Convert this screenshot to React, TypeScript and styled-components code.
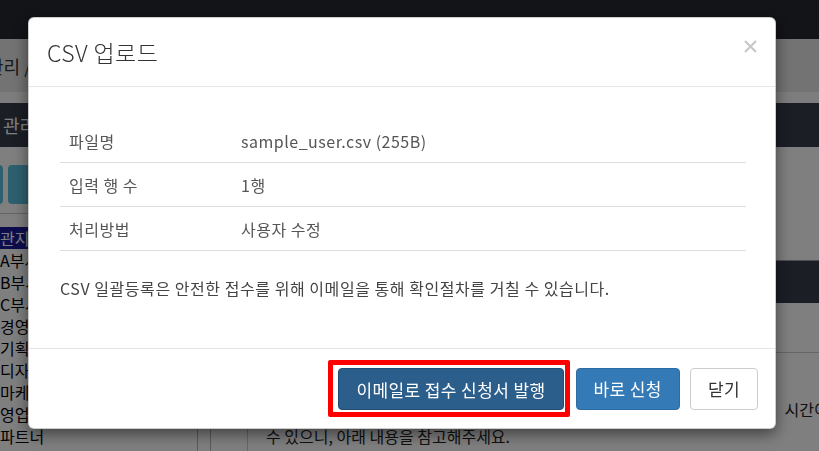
import styled, { createGlobalStyle } from "styled-components";

const GlobalStyle = createGlobalStyle`
    * { box-sizing: border-box; }
    html, body {
        margin: 0;
        padding: 0;
        height: 100%;
        overflow: hidden;
    }
    body {
        font-family: "Noto Sans CJK KR", "Noto Sans", sans-serif;
        background-color: #fff;
        color: #333;
    }
`;

/* ---------- page behind the modal ---------- */

const Page = styled.div`
    width: 100vw;
    height: 451px;
    overflow: hidden;
    display: flex;
    flex-direction: column;
`;

const TopNav = styled.div`
    height: 39px;
    flex-shrink: 0;
    background-color: #26282f;
`;

const Breadcrumb = styled.div`
    height: 53px;
    flex-shrink: 0;
    background-color: #e6e6e6;
    display: flex;
    align-items: center;
    font-size: 18px;
    color: #333;
    white-space: nowrap;
    span {
        margin-left: -13px;
    }
`;

const Band = styled.div`
    height: 11px;
    flex-shrink: 0;
    background-color: #fafafa;
`;

const Main = styled.div`
    flex: 1;
    display: flex;
    min-height: 0;
`;

const Sidebar = styled.div`
    width: 198px;
    flex-shrink: 0;
    border-right: 1px solid #b5b5b5;
    overflow: hidden;
`;

const DarkHeader = styled.div`
    height: 44px;
    background-color: #363c4a;
    color: #fff;
    font-size: 18px;
    display: flex;
    align-items: center;
    padding-left: 3px;
    white-space: nowrap;
`;

const ToolRow = styled.div`
    display: flex;
    gap: 5px;
    margin: 18px 0 0 -40px;
    height: 39px;
`;

const ToolButton = styled.div<{ $w: number }>`
    width: ${(p) => p.$w}px;
    flex-shrink: 0;
    border-radius: 4px;
    background-color: #5bc0de;
`;

const GroupList = styled.div`
    margin-top: 9px;
    border-top: 1px solid #c8c8c8;
    padding-top: 13px;
`;

const GroupItem = styled.div<{ $selected?: boolean }>`
    height: 22px;
    line-height: 22px;
    font-size: 16px;
    white-space: nowrap;
    color: ${(p) => (p.$selected ? "#fff" : "#000")};
    background-color: ${(p) => (p.$selected ? "#1a1a9c" : "transparent")};
`;

const Content = styled.div`
    flex: 1;
    margin-left: 12px;
    border-left: 1px solid #b5b5b5;
    overflow: hidden;
`;

const ContentBody = styled.div`
    height: 114px;
    border-bottom: 1px solid #9a9a9a;
`;

const DarkBand = styled.div`
    height: 42px;
    background-color: #363c4a;
`;

const NoticeBox = styled.div`
    margin: 49px 0 0 36px;
    border: 1px solid #ccc;
    border-right: none;
    padding: 16px 18px;
    font-size: 16px;
    line-height: 27px;
    color: #222;
    white-space: nowrap;
`;

/* ---------- modal ---------- */

const Backdrop = styled.div`
    position: fixed;
    inset: 0;
    background-color: rgba(0, 0, 0, 0.5);
`;

const ModalLayer = styled.div`
    position: fixed;
    inset: 0;
    overflow: hidden;
`;

const Dialog = styled.div`
    margin: 17px 0 0 28px;
    width: 748px;
    background-color: #fff;
    border: 1px solid rgba(0, 0, 0, 0.2);
    border-radius: 6px;
    box-shadow: 0 5px 15px rgba(0, 0, 0, 0.5);
`;

const ModalHeader = styled.div`
    height: 69px;
    display: flex;
    justify-content: space-between;
    align-items: center;
    padding: 0 18px;
    border-bottom: 1px solid #e5e5e5;
`;

const Title = styled.h4`
    margin: 0;
    font-size: 23px;
    font-weight: 300;
    letter-spacing: 0.4px;
    line-height: 1;
    color: #333;
`;

const CloseButton = styled.button`
    align-self: flex-start;
    margin-top: 22px;
    padding: 0;
    border: none;
    background: none;
    width: 13px;
    height: 13px;
    display: flex;
    cursor: pointer;
`;

const ModalBody = styled.div`
    padding: 32px 29px 50px 31px;
`;

const InfoRow = styled.div`
    display: grid;
    grid-template-columns: 172px 1fr;
    align-items: center;
    height: 44px;
    padding-left: 9px;
    border-bottom: 1px solid #ddd;
    font-size: 16px;
    letter-spacing: 0.5px;
    color: #555;
`;

const Notice = styled.p`
    margin: 27px 0 0;
    font-size: 16px;
    letter-spacing: 0.55px;
    line-height: 20px;
    color: #444;
`;

const ModalFooter = styled.div`
    height: 80px;
    border-top: 1px solid #e5e5e5;
    display: flex;
    justify-content: flex-end;
    align-items: center;
    gap: 10px;
    padding: 0 17px 0 16px;
`;

const HighlightFrame = styled.span`
    display: inline-flex;
    border: 5px solid #ff0000;
    border-radius: 2px;
    padding: 3px 1px 2px 5px;
    margin-right: -4px;
    background-color: #fff;
`;

const Button = styled.button<{ $variant: "dark" | "primary" | "default" }>`
    height: 42px;
    padding: 0 17px;
    font-family: inherit;
    font-size: 17px;
    letter-spacing: 0.4px;
    border-radius: 4px;
    cursor: pointer;
    white-space: nowrap;
    background-color: ${(p) =>
        p.$variant === "dark" ? "#2c5e8c" : p.$variant === "primary" ? "#337ab7" : "#fff"};
    border: 1px solid
        ${(p) => (p.$variant === "dark" ? "#204d74" : p.$variant === "primary" ? "#2e6da4" : "#ccc")};
    color: ${(p) => (p.$variant === "default" ? "#333" : "#fff")};
`;

const groups = ["관지고문", "A부서", "B부서", "C부서", "경영지원", "기획팀", "디자인팀", "마케팅팀", "영업팀", "파트너"];

const fileInfo = [
    { label: "파일명", value: "sample_user.csv (255B)" },
    { label: "입력 행 수", value: "1행" },
    { label: "처리방법", value: "사용자 수정" },
];

function App() {
    return (
        <>
            <GlobalStyle />
            <Page>
                <TopNav />
                <Breadcrumb>
                    <span>관리 / 사용자 관리</span>
                </Breadcrumb>
                <Band />
                <Main>
                    <Sidebar>
                        <DarkHeader>관리자 메뉴</DarkHeader>
                        <ToolRow>
                            <ToolButton $w={43} />
                            <ToolButton $w={90} />
                        </ToolRow>
                        <GroupList>
                            {groups.map((g, i) => (
                                <GroupItem key={g} $selected={i === 0}>
                                    {g}
                                </GroupItem>
                            ))}
                        </GroupList>
                    </Sidebar>
                    <Content>
                        <DarkHeader>사용자 목록</DarkHeader>
                        <ContentBody />
                        <DarkBand />
                        <NoticeBox>
                            <div>CSV 파일로 여러 사용자를 한 번에 등록하거나 수정할 수 있습니다.</div>
                            <div>업로드한 파일의 사용자 정보는 관리자 확인 후 순차적으로 곧바로 반영됩니다.&nbsp;&nbsp; 시간이 다소 소요될</div>
                            <div>수 있으니, 아래 내용을 참고해주세요.</div>
                        </NoticeBox>
                    </Content>
                </Main>
            </Page>
            <Backdrop />
            <ModalLayer>
                <Dialog>
                    <ModalHeader>
                        <Title>CSV 업로드</Title>
                        <CloseButton aria-label="닫기">
                            <svg width="13" height="13" viewBox="0 0 13 13">
                                <path d="M1 1 L12 12 M12 1 L1 12" stroke="#c6c6c6" strokeWidth="2" />
                            </svg>
                        </CloseButton>
                    </ModalHeader>
                    <ModalBody>
                        {fileInfo.map((row) => (
                            <InfoRow key={row.label}>
                                <span>{row.label}</span>
                                <span>{row.value}</span>
                            </InfoRow>
                        ))}
                        <Notice>CSV 일괄등록은 안전한 접수를 위해 이메일을 통해 확인절차를 거칠 수 있습니다.</Notice>
                    </ModalBody>
                    <ModalFooter>
                        <HighlightFrame>
                            <Button $variant="dark">이메일로 접수 신청서 발행</Button>
                        </HighlightFrame>
                        <Button $variant="primary">바로 신청</Button>
                        <Button $variant="default">닫기</Button>
                    </ModalFooter>
                </Dialog>
            </ModalLayer>
        </>
    );
}

export default App;
